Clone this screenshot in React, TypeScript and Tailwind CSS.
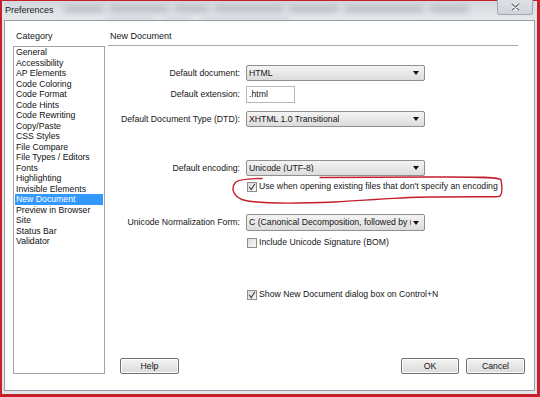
import React from "react";

const items = [
  "General",
  "Accessibility",
  "AP Elements",
  "Code Coloring",
  "Code Format",
  "Code Hints",
  "Code Rewriting",
  "Copy/Paste",
  "CSS Styles",
  "File Compare",
  "File Types / Editors",
  "Fonts",
  "Highlighting",
  "Invisible Elements",
  "New Document",
  "Preview in Browser",
  "Site",
  "Status Bar",
  "Validator",
];

function Arrow() {
  return (
    <svg width="6" height="4" viewBox="0 0 6 4" className="shrink-0">
      <path d="M0 0 L6 0 L3 4 Z" fill="#111" />
    </svg>
  );
}

function Select({ value }: { value: string }) {
  return (
    <div className="ml-[6px] flex h-full w-[179px] items-center justify-between gap-[2px] rounded-[2px] border border-[#8e8f8f] bg-gradient-to-b from-[#f4f4f4] to-[#dcdcdc] pl-[2px] pr-[5px]">
      <span className="min-w-0 overflow-hidden whitespace-nowrap leading-none">{value}</span>
      <Arrow />
    </div>
  );
}

function Check({ checked }: { checked: boolean }) {
  return (
    <div className="flex h-[10px] w-[10px] shrink-0 items-center justify-center border border-[#8f8f8f] bg-gradient-to-br from-[#dcdcdc] to-[#f8f8f8]">
      {checked && (
        <svg width="8" height="8" viewBox="0 0 8 8">
          <path d="M1.2 3.8 L3.2 6.8 L6.9 0.8" fill="none" stroke="#3a3a3a" strokeWidth="1.1" />
        </svg>
      )}
    </div>
  );
}

function Row({ label, children, h, mt }: { label: string; children: React.ReactNode; h: string; mt: string }) {
  return (
    <div className={`flex items-center ${h} ${mt}`}>
      <div className="w-[132px] whitespace-nowrap text-right leading-none">{label}</div>
      {children}
    </div>
  );
}

function CheckRow({ checked, label, mt }: { checked: boolean; label: string; mt: string }) {
  return (
    <div className={`ml-[139px] flex h-[11px] items-center gap-[2px] ${mt}`}>
      <Check checked={checked} />
      <span className="whitespace-nowrap leading-none">{label}</span>
    </div>
  );
}

function Button({ label, w }: { label: string; w: string }) {
  return (
    <div className={`flex h-[16px] ${w} items-center justify-center rounded-[2px] border border-[#707070] bg-gradient-to-b from-[#f3f3f3] to-[#dadada] leading-none shadow-[inset_0_0_0_1px_#fcfcfc]`}>
      {label}
    </div>
  );
}

export default function App() {
  return (
    <div className="relative h-[397px] w-[540px] overflow-hidden bg-[#c8202a] pb-[3px] pl-[2px] pr-[3px] pt-px font-['Liberation_Sans',Arial,sans-serif] text-[8.7px] text-[#151515]">
      <div className="flex h-full flex-col bg-[#e2e6ea] px-[2px] pb-[3px]">
        {/* Title bar */}
        <div className="flex h-[19px] items-start bg-gradient-to-b from-[#d3d8de] to-[#e6e9ec]">
          <span className="ml-[1px] mt-[4px] text-[9px] leading-[11px] text-[#1a1a1a]">Preferences</span>
          <div className="ml-[10px] mt-[5px] flex flex-1 flex-col gap-[5px] opacity-45">
            <div className="flex gap-[5px]">
              <div className="h-[6px] w-[40px] rounded bg-[#8c939c] blur-[3px]" />
              <div className="h-[6px] w-[60px] rounded bg-[#8c939c] blur-[3px]" />
              <div className="h-[6px] w-[35px] rounded bg-[#8c939c] blur-[3px]" />
              <div className="h-[6px] w-[70px] rounded bg-[#8c939c] blur-[3px]" />
              <div className="h-[6px] w-[50px] rounded bg-[#8c939c] blur-[3px]" />
              <div className="h-[6px] w-[80px] rounded bg-[#8c939c] blur-[3px]" />
              <div className="h-[6px] w-[40px] rounded bg-[#8c939c] blur-[3px]" />
            </div>
            <div className="flex gap-[8px] pl-[40px] opacity-60">
              <div className="h-[3px] w-[50px] rounded bg-[#9aa0a8] blur-[2px]" />
              <div className="h-[3px] w-[30px] rounded bg-[#9aa0a8] blur-[2px]" />
              <div className="h-[3px] w-[90px] rounded bg-[#9aa0a8] blur-[2px]" />
            </div>
          </div>
          <div className="-mt-px mr-[2px] flex h-[15px] w-[36px] items-center justify-center rounded-b-[3px] border border-t-0 border-[#a3a9b1] bg-gradient-to-b from-[#dde1e6] to-[#cfd4da]">
            <svg width="9" height="8" viewBox="0 0 9 8">
              <path d="M1 1 L8 7 M8 1 L1 7" stroke="#f4f4f4" strokeWidth="3" strokeLinecap="round" />
              <path d="M1 1 L8 7 M8 1 L1 7" stroke="#6d7278" strokeWidth="1.3" strokeLinecap="round" />
            </svg>
          </div>
        </div>

        {/* Client area */}
        <div className="flex flex-1 border border-[#979ca2] bg-white">
          {/* Left column */}
          <div className="flex w-[100px] flex-col pl-[8px]">
            <div className="pl-[3px] pt-[10px] text-[9px] leading-[11px]">Category</div>
            <div className="mb-[16px] mt-[4px] flex-1 border border-[#a3a3a3] bg-white">
              {items.map((it) => (
                <div
                  key={it}
                  className={`mx-px whitespace-nowrap px-px leading-[10.5px] ${
                    it === "New Document" ? "bg-[#3399ff] text-white" : "text-[#111]"
                  }`}
                >
                  {it}
                </div>
              ))}
            </div>
          </div>

          {/* Right column */}
          <div className="ml-[3px] flex flex-1 flex-col">
            <div className="mr-[16px] border-b border-[#a8a8a8] pb-[3px] pl-[2px] pt-[10px] text-[9px] leading-[11px]">
              New Document
            </div>

            <Row label="Default document:" h="h-[16px]" mt="mt-[19px]">
              <Select value="HTML" />
            </Row>
            <Row label="Default extension:" h="h-[17px]" mt="mt-[5px]">
              <div className="ml-[6px] flex h-full w-[49px] items-center border border-[#b5b8bd] bg-white pl-[2px] leading-none">
                .html
              </div>
            </Row>
            <Row label="Default Document Type (DTD):" h="h-[16px]" mt="mt-[8px]">
              <Select value="XHTML 1.0 Transitional" />
            </Row>
            <Row label="Default encoding:" h="h-[16px]" mt="mt-[33px]">
              <Select value="Unicode (UTF-8)" />
            </Row>
            <CheckRow checked label="Use when opening existing files that don't specify an encoding" mt="mt-[5px]" />
            <Row label="Unicode Normalization Form:" h="h-[17px]" mt="mt-[22px]">
              <Select value="C (Canonical Decomposition, followed by (" />
            </Row>
            <CheckRow checked={false} label="Include Unicode Signature (BOM)" mt="mt-[6px]" />
            <CheckRow checked label="Show New Document dialog box on Control+N" mt="mt-[41px]" />

            <div className="mb-[16px] mt-auto flex items-center pl-[12px] pr-[9px]">
              <Button label="Help" w="w-[59px]" />
              <div className="flex-1" />
              <Button label="OK" w="w-[58px]" />
              <div className="w-[7px]" />
              <Button label="Cancel" w="w-[59px]" />
            </div>
          </div>
        </div>
      </div>

      {/* Red hand-drawn annotation */}
      <svg className="pointer-events-none absolute left-0 top-0" width="540" height="397" viewBox="0 0 540 397">
        <path
          d="M262 178.5 C250 178.5 238 179 235 183 C231 188 233 196 242 199.5 C256 204 300 203.5 335 202 C370 200 395 197.5 430 197 C465 196.5 490 197 499 196.5 C503 195 502 186 501 180 C500 176.5 470 177 430 177 C390 177 350 177.5 320 177.5"
          fill="none"
          stroke="#c21f2b"
          strokeWidth="1.4"
          strokeLinecap="round"
        />
      </svg>
    </div>
  );
}
